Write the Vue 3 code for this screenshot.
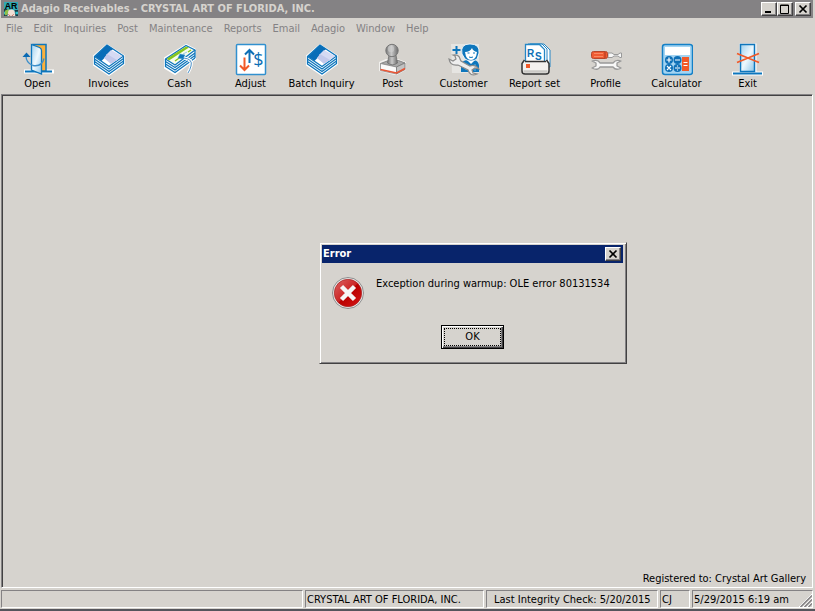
<script setup>
const menus = ['File', 'Edit', 'Inquiries', 'Post', 'Maintenance', 'Reports', 'Email', 'Adagio', 'Window', 'Help']
const tools = ['Open', 'Invoices', 'Cash', 'Adjust', 'Batch Inquiry', 'Post', 'Customer', 'Report set', 'Profile', 'Calculator', 'Exit']
</script>

<template>
  <div class="window">
    <header class="titlebar">
      <svg class="app-icon" viewBox="0 0 16 16" aria-hidden="true">
        <rect width="16" height="16" fill="#2fa9b5" />
        <path d="M0 8h4v8H0zM12 9h4v7h-4z" fill="#143c48" />
        <path d="M0 11h2v3H0zM13 11h3v3h-3z" fill="#2cc3cf" />
        <path d="M1 10l4-2 1 3-3 4H1z" fill="#8fc04a" />
        <path d="M5 10q3-3 7 0l1 6H4z" fill="#f1dfd5" />
        <path d="M5 14l2 2M11 14l-2 2" stroke="#c55b50" fill="none" />
        <text x="8" y="8" text-anchor="middle" class="app-letters">AR</text>
      </svg>
      <h1>Adagio Receivables - CRYSTAL ART OF FLORIDA, INC.</h1>
      <div class="caption-buttons">
        <button class="caption" aria-label="Minimize">
          <svg viewBox="0 0 12 10"><path d="M2 8h6" stroke="#000" stroke-width="2" /></svg>
        </button>
        <button class="caption" aria-label="Maximize">
          <svg viewBox="0 0 12 10"><path d="M1.500 1h8v8.500h-8zM1 1.500h9" fill="none" stroke="#000" /></svg>
        </button>
        <button class="caption close" aria-label="Close">
          <svg viewBox="0 0 12 10"><path d="M2.500 1.500l7 7M9.500 1.500l-7 7" stroke="#000" stroke-width="1.700" /></svg>
        </button>
      </div>
    </header>

    <nav class="menubar">
      <button v-for="m in menus" :key="m">{{ m }}</button>
    </nav>

    <div class="toolbar" role="toolbar">
      <button v-for="t in tools" :key="t" class="tool">
        <svg viewBox="0 0 33 33" aria-hidden="true">
          <defs>
            <linearGradient id="glass" x1="0" y1="0" x2="1" y2="1">
              <stop offset="0" stop-color="#9fd0ee" />
              <stop offset=".5" stop-color="#eef8fd" />
              <stop offset="1" stop-color="#8cc6ea" />
            </linearGradient>
            <linearGradient id="steel" x1="0" x2="1">
              <stop offset="0" stop-color="#777" />
              <stop offset=".45" stop-color="#c9c9c9" />
              <stop offset="1" stop-color="#6c6c6c" />
            </linearGradient>
          </defs>
          <g v-if="t === 'Open'">
            <path d="M3 28.500h30" stroke="#fff" stroke-width="4" />
            <path d="M4 28.500h27" stroke="#0e76bc" stroke-width="2" />
            <path d="M12 1.500h13V28h-6z" fill="#fbb03b" stroke="#0e76bc" stroke-width="1.500" />
            <path d="M10.500 1.500l8 3q2 1 2 3V31l-10-4z" fill="url(#glass)" stroke="#0e76bc" stroke-width="1.300" />
            <path d="M5 13q0 7 7 9.500M12 22.500q9 1.500 11-7" fill="none" stroke="#3c8fca" stroke-width="1.300" />
            <path d="M1.500 14l4-4.500 4 4.500z" fill="#0a6ab3" />
          </g>
          <g v-else-if="t === 'Invoices' || t === 'Batch Inquiry'" stroke-linejoin="round">
            <path d="M2 13v9l15 10 15-11v-8L15 2z" fill="#fff" stroke="#fff" stroke-width="2" />
            <path d="M2.500 21l14.500 10L31.500 20.500M2.500 18.500l14.500 10L31.500 18M2.500 16l14.500 10L31.500 15.500M2.500 13.500v8M31.500 13v8" fill="none" stroke="#0e76bc" stroke-width="1.300" />
            <path d="M2.500 13.500L15 2l16.500 11L17 23.500z" fill="#fff" stroke="#0e76bc" stroke-width="1.300" />
            <path d="M3 13.500L15 2l6 4L9.500 18z" fill="#086db8" />
            <path d="M14 12l5-5 11 6-6 5z" fill="#d5daf3" />
            <path d="M12 15l3-4 10 6-6 4z" fill="#c3c9eb" />
          </g>
          <g v-else-if="t === 'Cash'" stroke-linejoin="round">
            <path d="M2 15L23 2l10 5v8L12 31 2 25z" fill="#fff" stroke="#fff" stroke-width="2" />
            <path d="M2.500 23.500L12 29.500 32 15M2.500 21L12 27 32 12.500M2.500 18.500L12 24.500 32 10M2.500 16v8M32 7v8" fill="none" stroke="#0e76bc" stroke-width="1.300" />
            <path d="M2.500 16L23 2.500 32 7 12 22z" fill="#f7fcec" stroke="#0e76bc" stroke-width="1.300" />
            <path d="M4 15.500L23 3.500l3 1L6 17.500z" fill="#86c51e" />
            <path d="M12 18l7-5M25 9l3-2" stroke="#86c51e" stroke-width="1.500" />
            <path d="M17 11l5 1-2 4-5-1zM20 11l4-2" fill="#0e76bc" stroke="#3f94cf" stroke-width=".5" />
            <path d="M21 15q9 1 7 8-1 4-3 7" fill="none" stroke="#fff" stroke-width="3" />
            <path d="M21 15q9 1 7 8-1 4-3 7" fill="none" stroke="#4a8fc5" />
          </g>
          <g v-else-if="t === 'Adjust'">
            <rect x="2.500" y="1.500" width="29" height="30" rx="1" fill="#fff" stroke="#3190cf" stroke-width="1.500" />
            <path d="M15.500 20V7M11 11.500L15.500 7l4.500 4.500" fill="none" stroke="#0e6fb6" stroke-width="2" />
            <path d="M10.500 14.500V27M6 22.500l4.500 4.500 4.500-4.500" fill="none" stroke="#f15a29" stroke-width="2" />
            <text x="24.500" y="23" text-anchor="middle" class="dollar">$</text>
          </g>
          <g v-else-if="t === 'Post'" stroke-linejoin="round">
            <path d="M3 19l7-3h12l8 3v8l-9 5h-3L3 28z" fill="#f1f0ee" />
            <path d="M4.500 20.500l8-3h10l6.500 2.500-8.500 4z" fill="#a9a9a9" stroke="#777" stroke-width=".8" />
            <path d="M13 12h7l1.500 8q-5 3.500-10 0z" fill="url(#steel)" stroke="#686868" stroke-width=".7" />
            <circle cx="16" cy="7.500" r="6.200" fill="url(#steel)" stroke="#777" />
            <circle cx="15" cy="6" r="3.200" fill="#cfcfcf" opacity=".6" />
            <path d="M4.500 20.500l16 3.500v7L4.500 27.500z" fill="#fafafa" stroke="#888" stroke-width=".8" />
            <path d="M20.500 24l8.500-4v6.500L20.500 31z" fill="#c2c2c2" stroke="#777" stroke-width=".8" />
            <path d="M4.500 26.500l16 3.500 8.500-4.500" fill="none" stroke="#e85534" stroke-width="1.700" />
          </g>
          <g v-else-if="t === 'Customer'">
            <path d="M4 1h28v29H5z" fill="#e6e5e2" />
            <path d="M9.500 3v8M5.500 7h8" stroke="#0e76bc" stroke-width="2" />
            <path d="M14 29V21q2-4 7-4h5q5 0 6 5v7z" fill="#0e76bc" />
            <path d="M20 17l4 4 4-4z" fill="#fff" />
            <path d="M15 11Q13 1 23 1t9 9l-2 6q-6 4-12 0z" fill="#0e76bc" stroke="#fff" stroke-width=".8" />
            <path d="M18 9q5 0 7-4 1 3 5 4-1 8-6 8t-6-8z" fill="#fff" />
            <path d="M20.500 10h2M26 10h2M22 14q2 1 4 0" stroke="#0e76bc" fill="none" />
            <path d="M19 22v5M28 21v7" stroke="#63b3e4" />
            <path d="M2 16l4 2 3-2-1-3-2-1q6-1 7 4l1 2 9 5q5-2 9 3l-4-1-3 2 1 3 4 1q-7 3-9-4l-10-5q-8 1-9-6z" fill="#eee" stroke="#8b8b8b" stroke-width="1.200" />
          </g>
          <g v-else-if="t === 'Report set'">
            <path d="M12 1h14l6 6v17H12z" fill="#fff" stroke="#2486c5" />
            <path d="M10 1h14l5 5v16H10z" fill="#fff" stroke="#2486c5" />
            <path d="M7.500 1.500h14l5 5V21h-19z" fill="#fff" stroke="#2486c5" stroke-width="1.300" />
            <text x="9" y="14" class="report-letter">R</text>
            <text x="17" y="17" class="report-letter">S</text>
            <path d="M6.500 18L4 20.500V28q0 3 3 3h21q3 0 3-3v-7.500L28.500 18" fill="#f3f1ef" />
            <path d="M6.500 17L4 20.500V28q0 3 3 3h21q3 0 3-3v-7.500L28.500 17M7 18.500h21" fill="none" stroke="#333" stroke-width="1.500" />
            <path d="M5.500 28.500h24" stroke="#cac8c5" stroke-width="2.500" />
            <rect x="8" y="21" width="4" height="4" fill="#f15a29" />
          </g>
          <g v-else-if="t === 'Profile'" stroke-linejoin="round">
            <path d="M19 10h4l2 1.500h4l2-1.500h1.500v4.500H31L29 13h-4l-2 1.500h-4z" fill="#f7f7f7" stroke="#999" />
            <rect x="2.500" y="8.500" width="16" height="7" rx="2" fill="#ef5b32" stroke="#b6482d" />
            <path d="M5 10.500h9M5 13.500h9" stroke="#f98a63" />
            <path d="M16 9v6" stroke="#a9381f" />
            <path d="M3 18q6-2 8 2h13q3-4 8-2l-4 2v3l4 2q-5 3-8-1H11q-2 4-8 1l4-2v-3z" fill="#f7f7f7" stroke="#999" stroke-width="1.300" />
          </g>
          <g v-else-if="t === 'Calculator'">
            <rect x="2.500" y="1.500" width="30" height="30" rx="2.500" fill="#a3d4f2" stroke="#1480c7" stroke-width="1.500" />
            <rect x="5" y="4" width="25" height="8" fill="#fff" />
            <g fill="#0e6fb6">
              <circle cx="9" cy="17" r="4" /><circle cx="17.500" cy="17" r="4" />
              <circle cx="9" cy="25" r="4" /><circle cx="17.500" cy="25" r="4" />
            </g>
            <path d="M6.500 17h5M9 14.500v5M15 17h5M7 23l4 4M11 23l-4 4M15 25h5M17.500 22.500v1M17.500 26.500v1" stroke="#fff" stroke-width="1.200" />
            <rect x="22" y="14" width="7" height="14" fill="#f15a29" />
            <path d="M23.500 19.500h4M23.500 22.500h4" stroke="#fff" />
          </g>
          <g v-else>
            <path d="M1 30.500h31" stroke="#fff" stroke-width="4" />
            <rect x="8.500" y=".5" width="17" height="29" fill="#fff" />
            <rect x="9.500" y="1.500" width="14" height="27" fill="url(#glass)" stroke="#0e76bc" stroke-width="1.500" />
            <path d="M2 30.500h29" stroke="#0e76bc" stroke-width="2" />
            <path d="M6 10.500l22 9M28 10.500l-22 9" stroke="#f15a29" stroke-width="1.800" />
          </g>
        </svg>
        <span>{{ t }}</span>
      </button>
    </div>

    <main class="workspace">
      <p class="registered">Registered to: Crystal Art Gallery</p>
    </main>

    <footer class="statusbar">
      <span class="pane"></span>
      <span class="pane">CRYSTAL ART OF FLORIDA, INC.</span>
      <span class="pane check">Last Integrity Check: 5/20/2015</span>
      <span class="pane">CJ</span>
      <span class="pane">5/29/2015 6:19 am
        <svg class="grip" viewBox="0 0 13 13" aria-hidden="true">
          <path d="M0 13L13 0M4 13l9-9M8 13l5-5" stroke="#fff" />
          <path d="M1.500 13L13 1.500M5.500 13L13 5.500M9.500 13L13 9.500" stroke="#848284" stroke-width="1.500" />
        </svg>
      </span>
    </footer>

    <section class="dialog" role="alertdialog" aria-labelledby="dialog-title" aria-describedby="dialog-text">
      <header class="dialog-title">
        <h2 id="dialog-title">Error</h2>
        <button class="caption" aria-label="Close">
          <svg viewBox="0 0 12 10"><path d="M2.500 1.500l7 7M9.500 1.500l-7 7" stroke="#000" stroke-width="1.700" /></svg>
        </button>
      </header>
      <div class="message">
        <svg class="error-icon" viewBox="0 0 32 32" aria-hidden="true">
          <defs>
            <linearGradient id="red" x1="0" y1="0" x2="1" y2="1">
              <stop offset="0" stop-color="#dd6565" />
              <stop offset=".48" stop-color="#cb2525" />
              <stop offset=".52" stop-color="#b90000" />
              <stop offset="1" stop-color="#d81616" />
            </linearGradient>
          </defs>
          <circle cx="16" cy="16" r="15.500" fill="#e9e9e9" stroke="#8d8d8d" />
          <circle cx="16" cy="16" r="13.700" fill="url(#red)" stroke="#a62222" stroke-width=".7" />
          <path d="M9.500 9.500l13 13M22.500 9.500l-13 13" stroke="#f5f5f5" stroke-width="4.500" />
        </svg>
        <p id="dialog-text">Exception during warmup: OLE error 80131534</p>
      </div>
      <button class="ok"><span>OK</span></button>
    </section>
  </div>
</template>

<style>
body {
  margin: 0;
  background: #d6d3ce;
}
</style>

<style scoped>
* {
  box-sizing: border-box;
}
.window {
  position: relative;
  display: flex;
  flex-direction: column;
  min-height: 100vh;
  padding: 0 2px 0 1px;
  border-bottom: 2px solid #55555c;
  background: #d6d3ce;
  color: #000;
  font-family: "DejaVu Sans Condensed", Tahoma, "DejaVu Sans", sans-serif;
  font-size: 11px;
  line-height: 14px;
}
button {
  margin: 0;
  padding: 0;
  border: 0;
  background: none;
  color: inherit;
  font: inherit;
}
h1,
h2,
p {
  margin: 0;
  font-size: 11px;
}
.titlebar {
  display: flex;
  align-items: center;
  height: 18px;
  padding: 0 2px 0 3px;
  background: #848284;
  color: #d6d3ce;
}
.app-icon {
  width: 14px;
  height: 14px;
  margin-right: 3px;
}
.app-letters {
  font: bold 10px "Liberation Sans", sans-serif;
  fill: #000;
}
h1 {
  flex: 1;
  white-space: nowrap;
}
.caption-buttons {
  display: flex;
}
.caption {
  display: grid;
  place-items: center;
  width: 16px;
  height: 14px;
  border: 1px solid;
  border-color: #fff #424142 #424142 #fff;
  background: #d6d3ce;
  box-shadow: inset -1px -1px #848284;
}
.caption svg {
  width: 12px;
  height: 10px;
}
.caption.close {
  margin-left: 2px;
}
.menubar {
  display: flex;
  gap: 11px;
  height: 20px;
  padding: 2px 5px 0;
  color: #848284;
}
.toolbar {
  display: flex;
  height: 56px;
  padding: 5px 1px 0;
}
.tool {
  display: flex;
  flex-direction: column;
  align-items: center;
  gap: 1px;
  width: 71px;
  white-space: nowrap;
}
.tool svg {
  width: 33px;
  height: 33px;
}
.dollar {
  font: 18px "Open Sans", sans-serif;
  fill: #0e6fb6;
}
.report-letter {
  font: bold 10px "Liberation Sans", sans-serif;
  fill: #0e6fb6;
}
.workspace {
  flex: 1;
  display: flex;
  align-items: flex-end;
  justify-content: flex-end;
  border: 1px solid;
  border-color: #848284 #fff #fff #848284;
  box-shadow: inset 1px 1px #424142;
  padding: 0 6px 1px;
}
.statusbar {
  display: grid;
  grid-template-columns: 1fr 179px 172px 30px 121px;
  gap: 2px;
  padding: 2px 0 1px;
}
.pane {
  display: flex;
  align-items: center;
  justify-content: space-between;
  height: 18px;
  padding: 1px 0 0 1px;
  border: 1px solid;
  border-color: #848284 #fff #fff #848284;
  white-space: nowrap;
}
.check {
  padding-left: 7px;
}
.grip {
  align-self: flex-end;
  width: 13px;
  height: 13px;
}
.dialog {
  position: absolute;
  left: 319px;
  top: 242px;
  width: 308px;
  height: 122px;
  padding: 2px 3px 3px 2px;
  display: flex;
  flex-direction: column;
  background: #d6d3ce;
  border: 1px solid;
  border-color: #d6d3ce #424142 #424142 #d6d3ce;
  box-shadow: inset 1px 1px #fff, inset -1px -1px #848284;
}
.dialog-title {
  display: flex;
  align-items: center;
  justify-content: space-between;
  height: 18px;
  padding: 0 2px 0 1px;
  background: #08246b;
  color: #fff;
}
.message {
  display: flex;
  gap: 12px;
  padding: 14px 10px 0;
}
.message p {
  white-space: nowrap;
}
.error-icon {
  width: 32px;
  height: 32px;
  flex: none;
}
.ok {
  align-self: center;
  width: 63px;
  height: 24px;
  margin-top: 16px;
  padding: 2px;
  border: 1px solid #000;
  box-shadow: inset 1px 1px #fff, inset -1px -1px #424142, inset -2px -2px #848284;
}
.ok span {
  display: block;
  height: 18px;
  border: 1px dotted #000;
  line-height: 16px;
}
</style>
